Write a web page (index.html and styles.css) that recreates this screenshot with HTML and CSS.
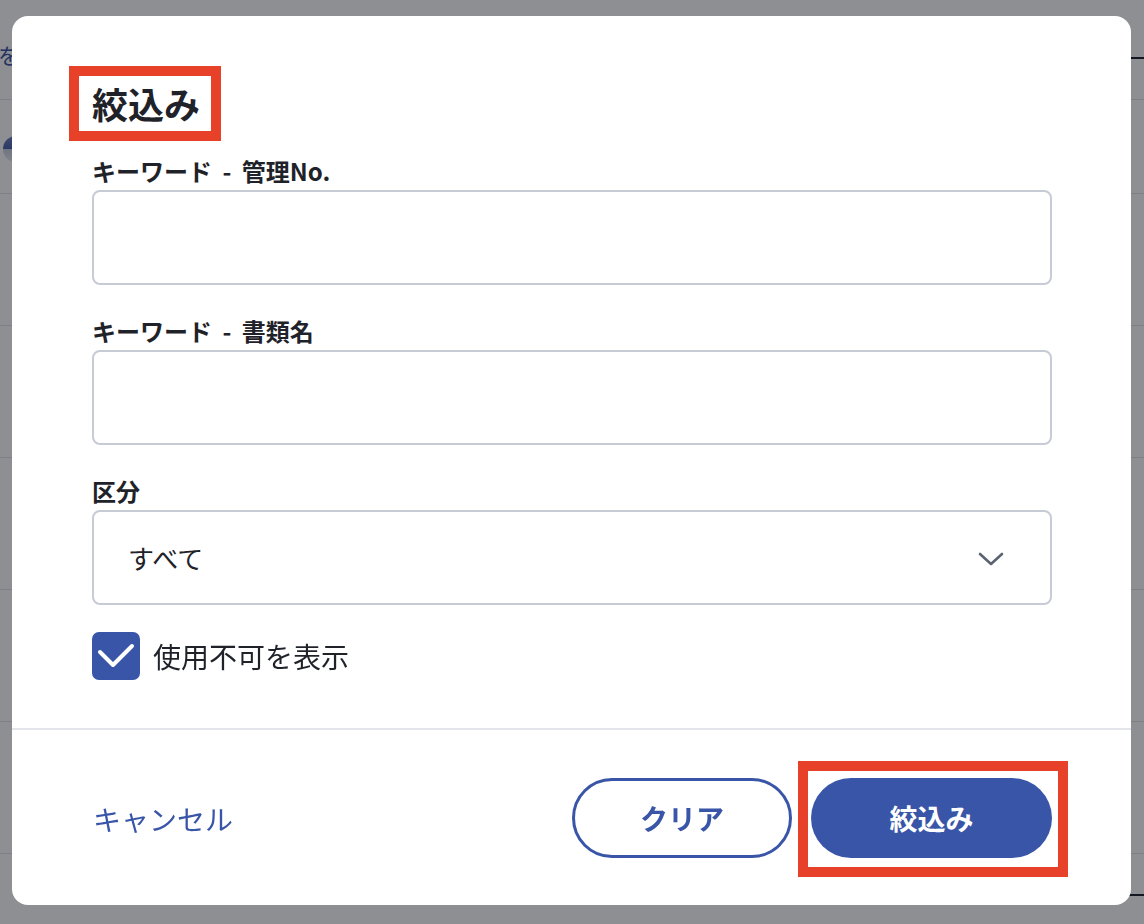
FILE: index.html
```html
<!DOCTYPE html>
<html lang="ja">
<head>
<meta charset="utf-8">
<title>絞込み</title>
<link rel="stylesheet" href="styles.css">
</head>
<body>
<div class="page">
  <div class="row row-top"><span class="crumb">を</span><span class="tab"></span></div>
  <div class="row row-second"><span class="avatar"></span></div>
  <div class="row row-std"></div>
  <div class="row row-std"></div>
  <div class="row row-std"></div>
  <div class="row row-std"></div>
  <div class="row row-std"></div>
  <div class="row row-last"><span class="foot-line"></span></div>
</div>
<div class="overlay"></div>
<div class="modal">
  <div class="modal-body">
    <h2 class="title"><span class="title-text marked">絞込み</span></h2>
    <div class="field">
      <label class="label">キーワード - 管理No.</label>
      <div class="input"></div>
    </div>
    <div class="field">
      <label class="label">キーワード - 書類名</label>
      <div class="input"></div>
    </div>
    <div class="field">
      <label class="label">区分</label>
      <div class="input select">
        <span class="select-value">すべて</span>
        <svg class="chevron" width="26" height="16" viewBox="0 0 26 16"><polyline points="2,3 13,13 24,3" fill="none" stroke="#5b6371" stroke-width="2.6" stroke-linecap="round" stroke-linejoin="round"/></svg>
      </div>
    </div>
    <div class="check-row">
      <span class="checkbox">
        <svg width="48" height="48" viewBox="0 0 48 48"><polyline points="8,20 21,33 40,14" fill="none" stroke="#fff" stroke-width="4" stroke-linecap="round" stroke-linejoin="round"/></svg>
      </span>
      <span class="check-label">使用不可を表示</span>
    </div>
  </div>
  <div class="modal-footer">
    <a class="cancel">キャンセル</a>
    <div class="actions">
      <button class="btn btn-outline">クリア</button>
      <span class="submit-wrap marked-btn"><button class="btn btn-primary">絞込み</button></span>
    </div>
  </div>
</div>
</body>
</html>
```
FILE: styles.css
```css
* { box-sizing: border-box; }
html, body { margin: 0; padding: 0; }
body {
  width: 1144px;
  height: 924px;
  overflow: hidden;
  background: #ffffff;
  font-family: "Noto Sans CJK JP", "Noto Sans", sans-serif;
  color: #1f2329;
}

/* background page */
.page { width: 1144px; }
.row { border-bottom: 1px solid #e2e3e8; }
.row-top {
  height: 100px;
  display: flex;
  justify-content: space-between;
  align-items: flex-start;
}
.crumb {
  margin-top: 38px;
  margin-left: -2px;
  font-size: 22px;
  color: #3a55a8;
}
.tab {
  width: 220px;
  height: 59px;
  border-bottom: 2px solid #1d2230;
}
.row-second { height: 94px; padding: 36px 0 0 3px; }
.avatar {
  display: block;
  width: 26px;
  height: 26px;
  border-radius: 50%;
  background: linear-gradient(180deg, #6d80bf 0%, #4a62ae 50%, #c9cfdf 50%, #e7e9f0 100%);
}
.row-std { height: 132px; }
.row-last {
  border-bottom: none;
  height: 71px;
  display: flex;
  justify-content: flex-end;
  align-items: flex-end;
}
.foot-line {
  width: 220px;
  height: 2px;
  margin-bottom: 29px;
  background: #1d2230;
}

.overlay {
  position: fixed;
  inset: 0;
  background: rgba(8, 10, 18, 0.46);
}

/* modal */
.modal {
  position: fixed;
  left: 12px;
  top: 16px;
  width: 1119px;
  height: 889px;
  background: #ffffff;
  border-radius: 16px;
  display: flex;
  flex-direction: column;
}
.modal-body {
  padding: 65px 79px 48px 80px;
  border-bottom: 2px solid #e3e5ea;
}
.title {
  margin: 0;
  font-size: 36px;
  line-height: 44px;
  font-weight: 700;
  color: #1f2329;
}
.title-text { position: relative; display: inline-block; }
.marked::after {
  content: "";
  position: absolute;
  top: -15px;
  left: -23px;
  right: -21px;
  bottom: -16px;
  border: 10px solid #e8412a;
}
.field { margin-top: 30px; }
.label {
  display: block;
  font-size: 24px;
  line-height: 32px;
  font-weight: 700;
  color: #1f2329;
  margin-bottom: 3px;
  word-spacing: 5px;
}
.input {
  height: 95px;
  border: 2px solid #c6cbd5;
  border-radius: 8px;
  background: #fff;
}
.select {
  display: flex;
  align-items: center;
  justify-content: space-between;
  padding: 0 46px 0 34px;
}
.select-value {
  font-size: 26px;
  color: #1f2329;
}
.chevron { display: block; margin-top: 2px; }
.check-row {
  margin-top: 27px;
  display: flex;
  align-items: center;
  gap: 13px;
  height: 48px;
}
.checkbox {
  width: 48px;
  height: 48px;
  border-radius: 7px;
  background: #3955a8;
  display: block;
}
.checkbox svg { display: block; }
.check-label {
  font-size: 28px;
  color: #1f2329;
  line-height: 1;
}

.modal-footer {
  flex: 1;
  display: flex;
  align-items: center;
  justify-content: space-between;
  padding: 0 79px 0 81px;
}
.cancel {
  font-size: 28px;
  color: #3955a8;
  line-height: 1;
  margin-top: 2px;
}
.actions {
  display: flex;
  align-items: center;
  gap: 19px;
}
.btn {
  height: 80px;
  border-radius: 40px;
  font-family: "Noto Sans CJK JP", "Noto Sans", sans-serif;
  font-size: 28px;
  font-weight: 700;
  cursor: pointer;
  padding: 0;
}
.btn-outline {
  width: 220px;
  background: #fff;
  color: #3955a8;
  border: 3px solid #3955a8;
}
.btn-primary {
  display: block;
  width: 241px;
  background: #3955a8;
  color: #fff;
  border: none;
}
.submit-wrap { position: relative; display: block; }
.marked-btn::after {
  content: "";
  position: absolute;
  top: -17px;
  left: -13px;
  right: -16px;
  bottom: -19px;
  border: 10px solid #e8412a;
}
```
